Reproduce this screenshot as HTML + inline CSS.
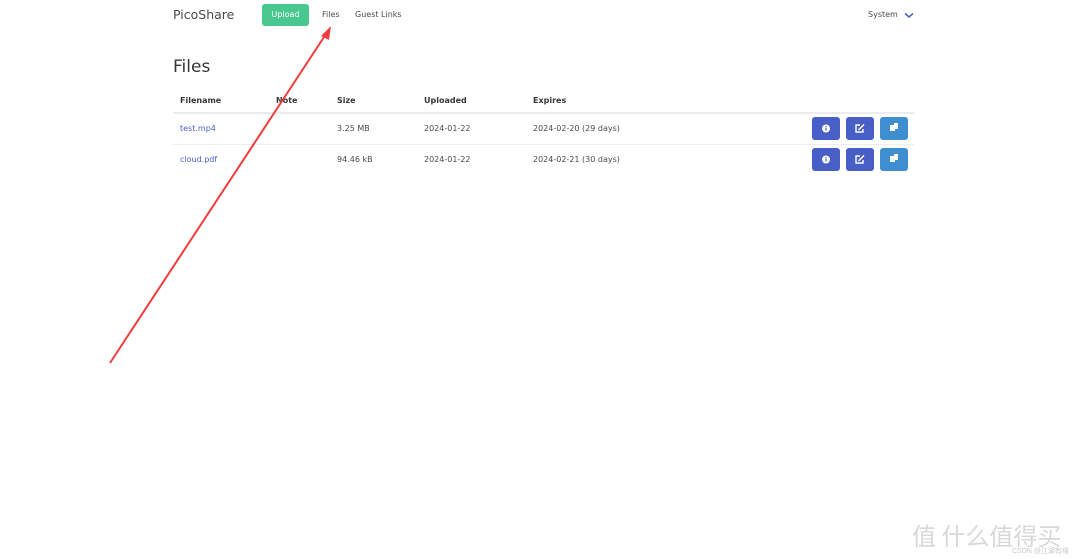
<!DOCTYPE html>
<html><head><meta charset="utf-8"><style>
body{margin:0;width:1080px;height:559px;background:#fff;font-family:"DejaVu Sans","Liberation Sans",sans-serif;position:relative;overflow:hidden;color:#4a4a4a}
.a{position:absolute;white-space:nowrap}
.btn{position:absolute;width:28px;height:23px;border-radius:3px;background:#485fc7}
.btn.c{background:#3e8ed0}
.hd{font-size:8px;font-weight:bold;color:#363636}
.td{font-size:8px;color:#4a4a4a}
.ln{color:#485fc7}
.hr{position:absolute;left:173px;width:741px;height:1px;background:#ececec}
</style></head><body>
<div class="a" style="left:173px;top:7px;font-size:12.5px;color:#4a4a4a">PicoShare</div>
<div class="a" style="left:262px;top:4px;width:47px;height:22px;background:#48c78e;border-radius:3px;color:#fff;font-size:8px;text-align:center;line-height:22px">Upload</div>
<div class="a" style="left:322px;top:10px;font-size:8px">Files</div>
<div class="a" style="left:355px;top:10px;font-size:8px">Guest Links</div>
<div class="a" style="left:868px;top:10px;font-size:8px">System</div>
<svg class="a" style="left:904px;top:12px" width="10" height="7"><path d="M1 1.5 L5 5 L9 1.5" stroke="#485fc7" stroke-width="1.5" fill="none"/></svg>
<div class="a" style="left:173px;top:57px;font-size:17px;color:#363636">Files</div>
<div class="a hd" style="left:180px;top:96px">Filename</div>
<div class="a hd" style="left:276px;top:96px">Note</div>
<div class="a hd" style="left:337px;top:96px">Size</div>
<div class="a hd" style="left:424px;top:96px">Uploaded</div>
<div class="a hd" style="left:533px;top:96px">Expires</div>
<div class="hr" style="top:112px;height:2px"></div>
<div class="hr" style="top:144px"></div>
<div class="a td ln" style="left:180px;top:124px">test.mp4</div>
<div class="a td" style="left:337px;top:124px">3.25 MB</div>
<div class="a td" style="left:424px;top:124px">2024-01-22</div>
<div class="a td" style="left:533px;top:124px">2024-02-20 (29 days)</div>
<div class="a td ln" style="left:180px;top:155px">cloud.pdf</div>
<div class="a td" style="left:337px;top:155px">94.46 kB</div>
<div class="a td" style="left:424px;top:155px">2024-01-22</div>
<div class="a td" style="left:533px;top:155px">2024-02-21 (30 days)</div>
<div class="btn" style="left:812px;top:117px"></div><div class="btn" style="left:846px;top:117px"></div><div class="btn c" style="left:880px;top:117px"></div>
<div class="btn" style="left:812px;top:148px"></div><div class="btn" style="left:846px;top:148px"></div><div class="btn c" style="left:880px;top:148px"></div>
<svg class="a" style="left:0;top:0" width="1080" height="559">
<g fill="#fff" stroke="none">
<circle cx="826" cy="128.5" r="4"/><circle cx="826" cy="159.5" r="4"/>
<rect x="890" y="125" width="5" height="6"/><rect x="894" y="123" width="4" height="6"/>
<rect x="890" y="156" width="5" height="6"/><rect x="894" y="154" width="4" height="6"/>
</g>
<g fill="#485fc7"><rect x="825.4" y="127.5" width="1.2" height="3"/><rect x="825.4" y="125.8" width="1.2" height="1"/>
<rect x="825.4" y="158.5" width="1.2" height="3"/><rect x="825.4" y="156.8" width="1.2" height="1"/></g>
<g stroke="#fff" stroke-width="1.4" fill="none">
<path d="M860 125 H856 V132 H863 V129"/><path d="M858.5 130 L864 124.5"/>
<path d="M860 156 H856 V163 H863 V160"/><path d="M858.5 161 L864 155.5"/>
</g>
<line x1="110" y1="363" x2="326" y2="34" stroke="#f03c3c" stroke-width="2"/>
<path d="M331 26 L321 36 L329 40 Z" fill="#f03c3c"/>
</svg>
<div class="a" style="left:912px;top:517px;font-size:24px;color:#d8d8d8;font-family:'Noto Sans CJK SC',sans-serif">值 什么值得买</div>
<div class="a" style="left:1012px;top:546px;font-size:7px;color:#c8c8c8;font-family:'Liberation Sans','Noto Sans CJK SC',sans-serif">CSDN @江湖有缘</div>
</body></html>
